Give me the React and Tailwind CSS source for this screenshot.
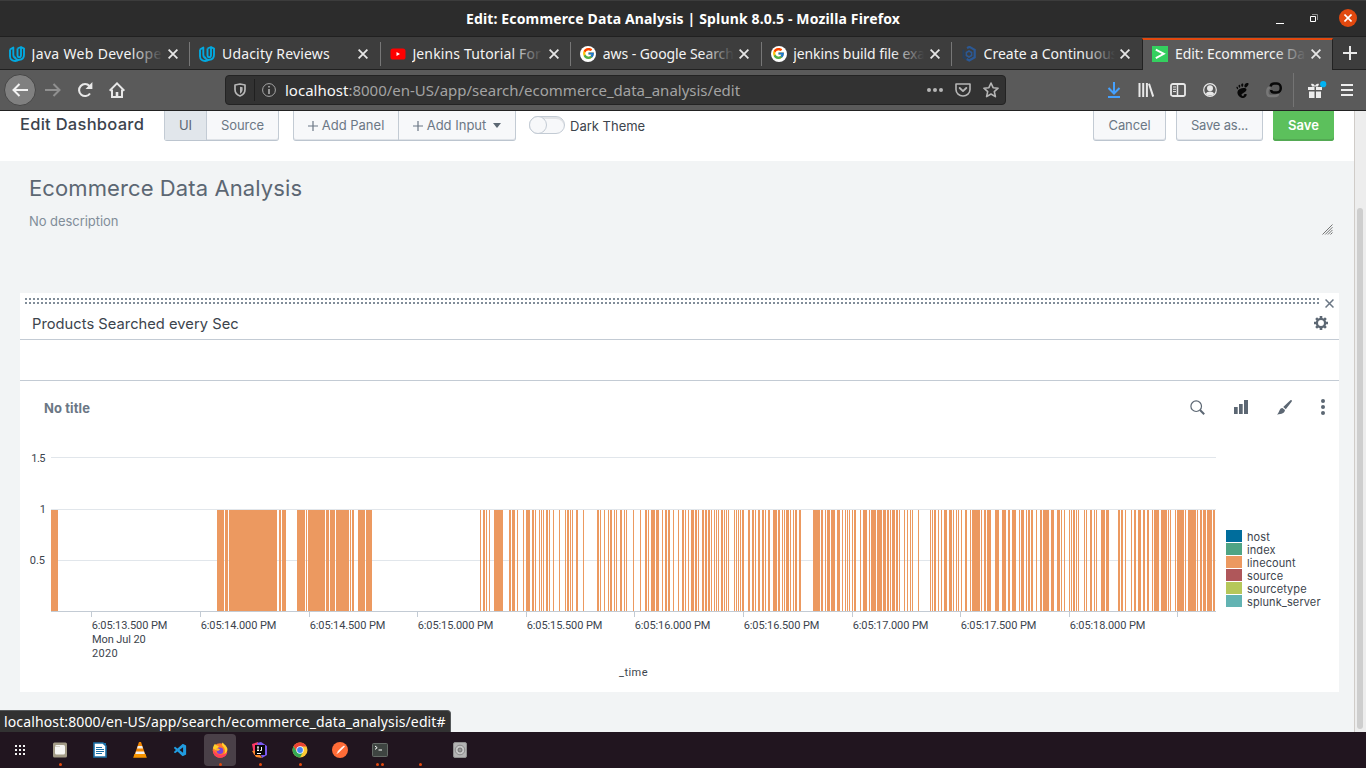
import { FcGoogle } from 'react-icons/fc';
import { SiGnome } from 'react-icons/si';
import { VscVscode } from 'react-icons/vsc';

const Udacity = () => (
  <svg width="16" height="16" viewBox="0 0 16 16" fill="none" stroke="#02a9e0" strokeWidth="1.900" strokeLinejoin="round">
    <path d="M1 3.500 4.300 1.500v7c0 2 .9 3.200 2.400 3.400M1 3.500v6.800c0 3 2.500 4.700 5.200 4.700 1.300 0 2.600-.4 3.600-1.200" />
    <path d="M8.500 2.500 12 1l3 1.600v6.200c0 3-2.200 4.900-4.800 5.100-2.400.1-3.900-1-4.300-3" />
    <path d="M8.500 2.500v6.600c0 1.600.8 2.300 1.900 2.200 1.200-.1 1.600-1.200 1.600-2.600V1" />
  </svg>
);
const YouTube = () => (
  <svg width="16" height="16" viewBox="0 0 16 16">
    <rect x="0.500" y="2.500" width="15" height="11" rx="2.600" fill="#f00" />
    <path d="M6.500 6v4l3.500-2z" fill="#fff" />
  </svg>
);
const Google = () => (
  <span className="flex h-4 w-4 items-center justify-center rounded-full bg-white">
    <FcGoogle size={13} />
  </span>
);
const Hexagon = () => (
  <svg width="16" height="16" viewBox="0 0 16 16" fill="none" stroke="#2b5894">
    <path d="M6 2 8.500.9l5.200 3v7.400L8.300 14.500 5.500 13" strokeWidth="2.200" />
    <path d="M2.500 3.500v8l3 1.700" stroke="#27405f" strokeWidth="2" />
    <path d="m8 5 2.600 1.500v3L8 11 5.400 9.500v-3z" strokeWidth="1.600" />
  </svg>
);
const Splunk = () => (
  <svg width="16" height="16" viewBox="0 0 16 16">
    <path fill="#34d05f" d="M0 0h16v16H0z" />
    <path d="m3.800 3.600 8 4.200-8 4.300" fill="none" stroke="#fff" strokeWidth="1.900" />
  </svg>
);

const tabs = [
  { icon: Udacity, label: 'Java Web Developer', cls: 'tracking-[0.32px]', fade: true },
  { icon: Udacity, label: 'Udacity Reviews', cls: 'tracking-[0.18px]' },
  { icon: YouTube, label: 'Jenkins Tutorial For B', cls: 'tracking-[0.14px]', fade: true },
  { icon: Google, label: 'aws - Google Search', cls: 'tracking-[-0.08px]', fade: true },
  { icon: Google, label: 'jenkins build file exa', cls: 'tracking-[-0.07px]', fade: true },
  { icon: Hexagon, label: 'Create a Continuous', cls: '', fade: true },
  { icon: Splunk, label: 'Edit: Ecommerce Data', cls: 'tracking-[-0.07px]', fade: true, active: true },
];

const Cross = ({ s = 10, w = 1.8, c = '#e6e6e6' }) => (
  <svg width={s} height={s} viewBox="0 0 10 10" stroke={c} strokeWidth={w} fill="none" className="shrink-0">
    <path d="m.6.6 8.800 8.800M9.400.6.6 9.400" />
  </svg>
);

function TitleBar() {
  return (
    <div className="grid h-[37px] shrink-0 grid-cols-[200px_1fr_200px] items-center border-t border-b border-t-[#3c3c3c] border-b-[#202020] bg-[#2c2c2c]">
      <span />
      <div className="pb-px text-center text-[14px] font-bold tracking-[0.15px] text-white">
        Edit: Ecommerce Data Analysis | Splunk 8.0.5 - Mozilla Firefox
      </div>
      <div className="flex items-center justify-end pr-[9px] pb-px">
        <svg width="10" height="12" viewBox="0 0 10 12" className="mr-[24px]"><path d="M1 10.500h8" transform="translate(0 1)" stroke="#fff" /></svg>
        <svg width="10" height="10" viewBox="0 0 10 10" fill="none" className="mr-[20px]">
          <path d="M1.500 3.500h5v5h-5z" stroke="#fff" />
          <path d="M3 1.500h5.500V7" stroke="#8c8c8c" />
        </svg>
        <span className="flex h-[18px] w-[18px] items-center justify-center rounded-full bg-[#e2490f]">
          <Cross s={8} w={2} c="#fff" />
        </span>
      </div>
    </div>
  );
}

function TabStrip() {
  return (
    <div className="flex h-[33px] shrink-0 bg-[#3d3d3d]">
      {tabs.map(({ icon: Icon, label, cls, fade, active }, i) => (
        <div
          key={i}
          className={
            active
              ? 'mt-px flex w-[191px] items-center border-t-2 border-x border-x-[#222] border-t-[#e2490f] bg-[#5a5a5a] pr-[10px] pb-[3px] pl-[9px]'
              : 'flex w-[190.400px] items-center border-b border-[#212121] pr-[12px] pl-[9px] pt-px'
          }
        >
          <Icon />
          <div className="relative ml-[6.600px] h-5 w-[131px] shrink-0 overflow-hidden text-[14px] leading-5 whitespace-nowrap text-[#f4f4f4]">
            <span className={cls}>{label}</span>
            {fade && (
              <span className={active ? 'absolute top-0 right-0 h-5 w-[32px] bg-linear-to-r from-transparent to-[#5a5a5a]' : 'absolute top-0 right-0 h-5 w-[32px] bg-linear-to-r from-transparent to-[#3d3d3d]'} />
            )}
          </div>
          <span className="ml-[5.400px] flex"><Cross /></span>
          {!active && i < 5 && <span className="ml-auto -mr-[12px] h-6 w-px bg-[#777]" />}
        </div>
      ))}
      <div className="flex flex-1 items-center justify-center border-b border-[#212121]">
        <svg width="14" height="14" viewBox="0 0 14 14" stroke="#e8e8e8" strokeWidth="2"><path d="M7 0v14M0 7h14" /></svg>
      </div>
    </div>
  );
}

function NavBar() {
  return (
    <div className="flex h-[41px] shrink-0 items-center border-b border-[#222] bg-[#5a5a5a]">
      <div className="flex w-[225px] items-center pl-1">
        <span className="flex h-8 w-8 items-center justify-center rounded-full border border-[#474747] bg-[#808080]">
          <svg width="16" height="14" viewBox="0 0 16 14" fill="none" stroke="#f2f2f2" strokeWidth="2"><path d="M16 7H1.500M7.500 1l-6 6 6 6" /></svg>
        </span>
        <svg width="16" height="14" viewBox="0 0 16 14" fill="none" stroke="#909090" strokeWidth="2" className="ml-[9px]"><path d="M0 7h14.500M8.500 1l6 6-6 6" /></svg>
        <svg width="16" height="16" viewBox="0 0 16 16" fill="none" className="ml-4">
          <path d="M13 11.500A6 6 0 1 1 12.500 4" stroke="#e8e8e8" strokeWidth="2.100" />
          <path d="M15.400 0v7H8.500z" fill="#e8e8e8" />
        </svg>
        <svg width="16" height="16" viewBox="0 0 16 16" fill="none" stroke="#e8e8e8" className="ml-4">
          <path d="m.6 8.700 7.400-7.300 7.400 7.300" strokeWidth="2" />
          <path d="M3 7.500V15h10V7.500" strokeWidth="2" />
          <path d="M8 10v5" strokeWidth="2.600" />
        </svg>
      </div>
      <div className="flex h-[30px] w-[781px] items-center rounded-[4px] border border-[#232323] bg-[#323232] text-[#a3a3a3]">
        <svg width="12" height="14" viewBox="0 0 12 14" fill="none" stroke="#b6b6b6" className="ml-2">
          <path d="M6 1 11 2v4.500c0 3-2 5.400-5 6.500-3-1.100-5-3.500-5-6.500V2z" strokeWidth="1.700" strokeLinejoin="round" />
          <path d="M6 3.700v7c1.600-.9 2.600-2.300 2.600-4.200v-2.300z" fill="#b6b6b6" stroke="none" />
        </svg>
        <span className="mr-[7px] ml-[8px] h-[22px] w-px bg-[#202020]" />
        <svg width="14" height="14" viewBox="0 0 14 14" fill="none" stroke="#a6a6a6">
          <circle cx="7" cy="7" r="6.400" />
          <path d="M7 6v5M7 3v1.600" strokeWidth="1.700" />
        </svg>
        <span className="ml-[9px] text-[15px] tracking-normal whitespace-nowrap"><span className="text-[#f7f7f7]">localhost</span>:8000/en-US/app/search/ecommerce_data_analysis/edit</span>
        <div className="mr-[6px] ml-auto flex items-center gap-[12px]">
          <svg width="16" height="4" viewBox="0 0 16 4" fill="#b6b6b6"><circle cx="2" cy="2" r="2" /><circle cx="8" cy="2" r="2" /><circle cx="14" cy="2" r="2" /></svg>
          <svg width="16" height="14" viewBox="0 0 16 14" fill="none" stroke="#b6b6b6" strokeLinecap="round" strokeLinejoin="round">
            <path d="M1 1h14v5.500a7 6.500 0 0 1-14 0z" strokeWidth="1.600" />
            <path d="m4.700 5 3.300 3.100L11.300 5" strokeWidth="1.900" />
          </svg>
          <svg width="16" height="16" viewBox="0 0 16 16" fill="none" stroke="#b6b6b6" strokeWidth="1.600" strokeLinejoin="round"><path d="m8 1 2.100 4.700 5 .5-3.800 3.400 1.100 5L8 12l-4.400 2.600 1.100-5L.9 6.200l5-.5z" /></svg>
        </div>
      </div>
      <div className="ml-auto flex items-center">
        <svg width="14" height="16" viewBox="0 0 14 16" fill="none" stroke="#45a1ff" strokeWidth="2"><path d="M7 0v11M1.500 6 7 11.500 12.500 6M1 15h12" /></svg>
        <svg width="16" height="14" viewBox="0 0 16 14" stroke="#e8e8e8" strokeWidth="2" className="ml-[17px]"><path d="M1.500 0v14M5.200 0v14M8.900 0v14M11 .8l4.200 12.800" strokeWidth="2" /></svg>
        <svg width="16" height="14" viewBox="0 0 16 14" fill="none" stroke="#e8e8e8" className="ml-[16px]">
          <rect x="1" y="1" width="14" height="12" rx="1.800" strokeWidth="1.800" /><path d="M7.500 1v12" strokeWidth="1.500" /><path d="M3 4h3M3 6.300h3M3 8.600h3" />
        </svg>
        <svg width="14" height="14" viewBox="0 0 14 14" className="ml-[17px]">
          <circle cx="7" cy="7" r="6.300" fill="none" stroke="#e8e8e8" strokeWidth="1.200" />
          <circle cx="7" cy="5.300" r="3" fill="#e8e8e8" /><path d="M2.800 11c.7-2 2.300-2.600 4.200-2.600s3.500.6 4.200 2.600A6 6 0 0 1 7 12.600 6 6 0 0 1 2.800 11" fill="#e8e8e8" />
        </svg>
        <SiGnome size={15} color="#080808" className="ml-[18px]" />
        <svg width="16" height="16" viewBox="0 0 16 16" fill="none" strokeWidth="2.500" className="ml-[16px]">
          <path d="M4.500 5.500H4C.4 6 .4 14 4 14h5c2 0 3-.8 3-2.500" stroke="#777" />
          <path d="M4.500 4.500C5 2.500 6 1.500 8 1.500h3c5 0 5 9 0 9H8c-2 0-2.800-1-2.800-2.500" stroke="#080808" />
        </svg>
        <span className="ml-[11px] h-[34px] w-px bg-[#747474]" />
        <svg width="20" height="18" viewBox="0 0 20 18" className="ml-[14px]">
          <path d="M0 6h6.500v3H0zM8 6h6v3H8zM1 10.500h5.500V17H1zM8 10.500h5V17H8zM3 3c2-1 3.500.500 4 2 .5-1.500 2-3 4-2l-1 2.500H4z" fill="#ededed" />
          <circle cx="15.200" cy="3.200" r="3.100" fill="#00b3f4" />
        </svg>
        <svg width="12" height="12" viewBox="0 0 12 12" stroke="#ededed" strokeWidth="2" className="mr-[13px] ml-[13px]"><path d="M0 1h12M0 6h12M0 11h12" /></svg>
      </div>
    </div>
  );
}

const Plus = () => (
  <svg width="10" height="10" viewBox="0 0 10 10" stroke="#6b7785" strokeWidth="1.200" className="mr-1"><path d="M5 0v10M0 5h10" /></svg>
);

function DashboardHeader() {
  const group = 'flex h-[30px] items-stretch rounded-b-[3px] border border-t-0 border-[#c3cbd4] border-b-[#bcc5cf] bg-[#f7f8fa] text-[13px] text-[#6b7785] shadow-[inset_0_-1px_0_#dfe3e8]';
  const cell = 'flex items-center justify-center';
  return (
    <div className="flex h-[50px] shrink-0 items-start bg-white pr-[20px] pl-5 font-[Inter,sans-serif]">
      <h1 className="w-[144px] pt-px text-[16.500px] leading-[24px] font-medium tracking-[0.270px] text-[#3c444d]">Edit Dashboard</h1>
      <div className={`${group} w-[115px]`}>
        <span className={`${cell} w-[42px] border-r border-[#c3cbd4] bg-[#e1e6eb] text-[#5c6773]`}>UI</span>
        <span className={`${cell} flex-1 tracking-[-0.090px]`}>Source</span>
      </div>
      <div className={`${group} ml-[14px] w-[223px]`}>
        <span className={`${cell} w-[105px] border-r border-[#c3cbd4]`}><Plus />Add Panel</span>
        <span className={`${cell} flex-1`}>
          <Plus />Add Input
          <svg width="8" height="5" viewBox="0 0 8 5" className="ml-[7px]"><path d="M0 0h8L4 5z" fill="#5c6773" /></svg>
        </span>
      </div>
      <span className="mt-[5px] ml-[13px] flex h-[18px] w-[36px] rounded-full border border-[#c3cbd4] bg-[#f7f8fa] shadow-[inset_0_2px_0_#e1e3e6]">
        <span className="-mt-px -ml-px h-[18px] w-[18px] rounded-full border border-[#c3cbd4] bg-[#f7f8fa]" />
      </span>
      <span className="ml-[5px] pt-[5px] text-[13px] leading-5 text-[#3c444d]">Dark Theme</span>
      <div className="ml-auto flex gap-[10px]">
        <span className={`${group} ${cell} w-[73px]`}><span className="self-center tracking-[-0.110px]">Cancel</span></span>
        <span className={`${group} ${cell} w-[87px]`}><span className="self-center tracking-[-0.200px]">Save as...</span></span>
        <span className="flex h-[30px] w-[61px] items-center justify-center rounded-b-[3px] bg-[#5cc05c] text-[13px] font-semibold text-white shadow-[inset_0_-2px_0_#53a953]">Save</span>
      </div>
    </div>
  );
}

/* [x, width] of every bucket that has events */
const bars = [
  [51,7],[217,7],[225,3],[229,48],[279,2],[282,4],[297,8],[306,1],[308,17],[326,3],[330,5],[336,13],[350,1],[352,2],[358,7],[366,6],
  [480,1],[483,2],[486,1],[489,1],[494,9],[509,2],[512,3],[517,1],[523,1],[526,4],[532,2],[535,1],[539,1],[541,1],[543,1],[546,2],[549,1],[553,1],[559,1],[565,1],[567,2],[570,1],[572,1],[576,2],[583,1],[597,2],[600,1],[604,1],[608,1],[610,2],[614,1],[616,1],[620,2],[624,1],[626,1],[633,1],[640,1],[645,2],[648,1],[651,4],[656,3],[662,1],[665,2],[668,2],[673,1],[678,1],[682,2],[685,1],[688,1],[691,3],[695,2],[698,1],[702,2],[705,2],[708,2],[711,1],[714,1],[716,1],[718,1],[721,2],[724,1],
  [726,1],[728,1],[734,1],[736,1],[738,1],[740,1],[742,2],[748,2],[752,2],[755,1],[758,2],[762,2],[765,1],[768,2],[773,4],[778,2],[782,1],[784,1],[786,3],[790,1],[793,1],[795,2],[799,2],[813,7],[821,2],[825,1],[827,3],[831,4],[837,3],[842,1],[845,1],[847,1],[849,1],[852,1],[854,2],[860,1],[863,4],[869,1],[871,5],[877,5],[883,3],[887,2],[890,1],[892,3],[896,2],[899,1],[904,1],[907,1],[910,1],[912,1],[918,1],[930,1],[932,1],[934,2],[938,1],[941,1],[944,3],[949,3],[953,1],[956,1],[958,1],[961,1],[965,2],
  [970,1],[972,8],[981,1],[984,2],[987,4],[995,4],[1002,4],[1008,2],[1012,4],[1019,1],[1021,3],[1026,1],[1028,2],[1031,2],[1036,1],[1040,2],[1043,6],[1051,3],[1057,3],[1061,1],[1064,1],[1069,1],[1071,1],[1073,2],[1076,1],[1078,1],[1084,1],[1086,1],[1090,2],[1094,1],[1096,1],[1101,4],[1106,3],[1118,2],[1121,2],[1125,1],[1131,1],[1134,2],[1138,3],[1143,2],[1147,2],[1152,1],[1154,5],[1161,6],[1168,1],[1170,1],[1175,1],[1177,7],[1185,1],[1188,8],[1197,1],[1200,2],[1203,3],[1207,5],[1213,2],
];
const ticks = [
  [91, '6:05:13.500 PM'], [200, '6:05:14.000 PM'], [309, '6:05:14.500 PM'], [417, '6:05:15.000 PM'], [526, '6:05:15.500 PM'],
  [634, '6:05:16.000 PM'], [743, '6:05:16.500 PM'], [852, '6:05:17.000 PM'], [960, '6:05:17.500 PM'], [1069, '6:05:18.000 PM'], [1177, ''],
];
const legend = [
  ['host', '#006d9c'], ['index', '#4fa484'], ['linecount', '#ec9960'], ['source', '#af575a'], ['sourcetype', '#b6c75a'], ['splunk_server', '#62b3b2'],
];

function Chart() {
  return (
    <svg width="1319" height="262" viewBox="20 430 1319 262" className="block shrink-0 font-[Roboto,sans-serif] text-[11px]" fill="#3c444d">
      <path d="M51 457.500h1165M51 509.500h1165M51 560.500h1165" stroke="#e1e6eb" />
      {bars.map(([x, w]) => <rect key={x} x={x} y="510" width={w} height="101" fill="#ec9960" />)}
      <path d="M51 611.500h1165" stroke="#c3cbd4" />
      <g textAnchor="end"><text x="45" y="462" className="tracking-[-0.500px]">1.5</text><text x="46" y="513">1</text><text x="45" y="564">0.5</text></g>
      {ticks.map(([x, t]) => (
        <g key={x}>
          <path d={`M${x + 0.5} 612v5`} stroke="#c3cbd4" />
          <text x={x + 0.7} y="629" className="tracking-[-0.100px]">{t}</text>
        </g>
      ))}
      <text x="92" y="643" className="tracking-[-0.100px]">Mon Jul 20</text>
      <text x="92" y="657" className="tracking-[0.300px]">2020</text>
      <text x="619" y="676" className="tracking-[0.450px]">_time</text>
      {legend.map(([t, c], i) => (
        <g key={t}>
          <rect x="1226" y={530 + i * 13} width="16" height="12" fill={c} />
          <text x="1247" y={541 + i * 13} className="font-[Inter,sans-serif] tracking-[0.100px]">{t}</text>
        </g>
      ))}
    </svg>
  );
}

function Panel() {
  return (
    <div className="mx-5 mr-[15px] flex h-[399px] flex-col bg-white">
      <div className="flex h-[17px] items-start pt-[5px] pl-[5px]">
        <svg width="1296" height="6" className="shrink-0">
          <defs><pattern id="grip" width="4" height="4" patternUnits="userSpaceOnUse"><path d="M0 0h2v2H0z" fill="#818d99" /></pattern></defs>
          <rect width="1296" height="6" fill="url(#grip)" />
        </svg>
        <span className="ml-[4px] pt-px"><Cross s={9} w={1.7} c="#6b7785" /></span>
      </div>
      <div className="flex h-[30px] items-start justify-between border-b border-[#c3cbd4] pr-[11px] pl-3">
        <span className="pt-[4px] text-[14.700px] leading-5 tracking-[0.030px] text-[#3c444d]">Products Searched every Sec</span>
        <svg width="14" height="14" viewBox="-7 -7 14 14" className="mt-[6px]">
          <circle r="4.100" fill="none" stroke="#5c6773" strokeWidth="2.300" />
          <g stroke="#5c6773" strokeWidth="2.600"><path d="M0-7v2.500M0 7V4.500M-7 0h2.500M7 0H4.500M-4.900-4.900l1.700 1.700M4.900 4.900 3.200 3.200M-4.900 4.900l1.700-1.700M4.900-4.900 3.200-3.200" /></g>
        </svg>
      </div>
      <div className="h-[41px] border-b border-[#c3cbd4]" />
      <div className="flex h-[49px] items-start justify-between pr-[14px] pl-6">
        <span className="pt-[17px] text-[13px] leading-5 font-bold tracking-[0.090px] text-[#6b7785]">No title</span>
        <div className="flex h-[52px] items-center">
          <svg width="15" height="15" viewBox="0 0 15 15" fill="none" stroke="#5c6773"><circle cx="6.200" cy="6.200" r="5.300" strokeWidth="1.200" /><path d="m10 10 4.200 4.200" strokeWidth="2" /></svg>
          <svg width="14" height="14" viewBox="0 0 14 14" fill="#5c6773" className="ml-[29px]"><path d="M0 7h3.700v7H0zM5 4h3.700v10H5zM10 0h4v14h-4z" /></svg>
          <svg width="15" height="15" viewBox="0 0 15 15" fill="#5c6773" className="ml-[29px]"><path d="M14.600.3c.5.500.3 1-.2 1.700L8.800 9.200 6.200 7.100 12.600.9c.8-.8 1.500-1.100 2-.6M5.400 7.900 8 10c-.3 3-3.500 4.500-8 4.400 2.500-1.600 2-6.400 5.400-6.500" /></svg>
          <svg width="4" height="16" viewBox="0 0 4 16" fill="#5c6773" className="ml-[29px]"><circle cx="2" cy="2" r="2" /><circle cx="2" cy="8" r="2" /><circle cx="2" cy="14" r="2" /></svg>
        </div>
      </div>
      <Chart />
    </div>
  );
}

const Lib = ({ children }) => <svg width="16" height="16" viewBox="0 0 16 16">{children}</svg>;
const apps = [
  { dots: 0, el: <Lib><g fill="#f2f2f2">{[3, 7, 11].map((y) => [3, 7, 11].map((x) => <rect key={`${x}-${y}`} x={x} y={y} width="2" height="2" />))}</g></Lib> },
  { dots: 1, el: <Lib><rect x="1" y="0.500" width="14" height="15" rx="1.500" fill="#a39b86" /><rect x="3" y="3" width="10" height="9.500" rx="1.500" fill="#f6f5f2" /><path d="M3 4.500h5" stroke="#d6d1c7" /></Lib> },
  { dots: 0, el: <Lib><path d="M2 1h9l3 3v11H2z" fill="#fff" stroke="#1c71a8" strokeWidth="1.600" /><path d="M4 5.500h6M4 7.500h8M4 9.500h8M4 11.500h6" stroke="#1c71a8" strokeWidth="1.200" /><path d="M11 1h3v3z" fill="#1c71a8" /></Lib> },
  { dots: 0, el: <Lib><path d="M7 0h2l4.500 13h-11z" fill="#f28500" /><path d="m5.800 4 4.400 0 .8 2.500H5zM4 9.500h8l.8 2.500H3.300z" fill="#eee" /><path d="M2.500 12h11l1.300 3.800H1.200z" fill="#f79400" /></Lib> },
  { dots: 0, el: <VscVscode size={15} color="#219ce0" /> },
  { dots: 1, active: true, el: <Lib><circle cx="8" cy="8.500" r="7.300" fill="#ff7a2b" /><path d="M1 8C1 12.500 4 16 9 15.800c4-.3 6-3 6.300-6C12 14 5 14 1 8" fill="#ff3f5a" /><path d="M10.500.5c-1 1.500-.5 3 .5 4 2 2 2.500 4 1.500 7.500 2-1 3-4 2.900-5.200C14.500 3.500 12 2.500 10.500.5M1 6.500C1.300 4.500 2 3 3 1.800 3.500 3 5 4 7 4L4 8z" fill="#ffd02b" /><circle cx="8" cy="8.700" r="3.300" fill="#7a42d8" /><path d="M3.500 6.500c2-.8 3.500 0 4.500 1C7 9 5 9 4.500 8.500z" fill="#ffb52a" /></Lib> },
  { dots: 1, el: <Lib><path d="M0 2 6 0l2 8-6 5z" fill="#fe3866" /><path d="m5 1 4-1 6 4v9l-5 3z" fill="#7a58f0" /><path d="m0 9 5-1 5 8-6-1z" fill="#fb8a2b" /><rect x="3" y="3" width="10" height="10" fill="#080808" /><path d="M5 5h2M6 5v3.500M5 8.500h2M9.500 5v3.500H8.200M5 11.500h4" stroke="#fff" fill="none" /></Lib> },
  { dots: 1, el: <Lib><circle cx="8" cy="8" r="7.500" fill="#fcc934" /><path d="M1.500 4.300A7.500 7.500 0 0 1 14.600 4.500H8L5 9.700z" fill="#ea4335" /><path d="M1.500 4.300A7.500 7.500 0 0 0 8 15.500l3.200-5.700H5z" fill="#34a853" /><circle cx="8" cy="8" r="3.700" fill="#fff" /><circle cx="8" cy="8" r="2.900" fill="#4285f4" /></Lib> },
  { dots: 0, el: <Lib><circle cx="8" cy="8" r="8" fill="#ff6c37" /><path d="m12 3.500-6 6-1.700 2.700 2.600-1.800 6-6z" fill="#fff" /><path d="m6 9.500 5-5" stroke="#fff" /></Lib> },
  { dots: 2, el: <Lib><rect x="0.500" y="1.500" width="15" height="13" rx="1" fill="#3e4441" stroke="#666c68" /><path d="m3 4 2.200 1.700L3 7.400M6.500 8h3.500" stroke="#fff" fill="none" /></Lib> },
  { dots: 1, el: <span className="h-4 w-4" /> },
  { dots: 0, el: <Lib><rect x="1.500" y="0.500" width="13" height="15" rx="1.500" fill="#b4b4b4" stroke="#8f8f8f" /><circle cx="8" cy="8" r="4.800" fill="#c6c6c6" stroke="#8a8a8a" /><circle cx="8" cy="8" r="2" fill="#9a9a9a" stroke="#707070" /></Lib> },
];

function Taskbar() {
  return (
    <div className="flex h-9 shrink-0 items-center bg-[#21151f] pl-1">
      {apps.map(({ dots, el, active }, i) => (
        <div key={i} className={active ? 'relative mr-2 flex h-8 w-8 items-center justify-center rounded-[4px] bg-[#4a4048]' : 'relative mr-2 flex h-8 w-8 items-center justify-center'}>
          {el}
          <span className="absolute bottom-0 left-0 flex w-full justify-center gap-[2px]">
            {Array.from({ length: dots }, (_, d) => <span key={d} className="h-[3px] w-[3px] rounded-full bg-[#e2490f]" />)}
          </span>
        </div>
      ))}
    </div>
  );
}

export default function App() {
  return (
    <div className="flex h-[768px] w-[1366px] flex-col overflow-hidden bg-[#f2f4f5] font-['Noto_Sans',sans-serif]">
      <TitleBar />
      <TabStrip />
      <NavBar />
      <div className="relative flex h-[621px] shrink-0">
        <div className="flex w-[1354px] flex-col font-[Inter,sans-serif]">
          <DashboardHeader />
          <div className="h-[132px] px-[21px] pl-[29px]">
            <h2 className="pt-[12px] text-[22px] leading-[30px] tracking-[0.100px] text-[#5c6773]">Ecommerce Data Analysis</h2>
            <p className="pt-[8px] text-[13px] leading-5 tracking-[-0.050px] text-[#818d99]">No description</p>
            <div className="-mt-[7px] flex justify-end">
              <svg width="11" height="11" viewBox="0 0 11 11" stroke="#666" strokeWidth="0.900"><path d="M.5 10.500l10-10M3.200 10.500l7.300-7.300M5.900 10.500l4.600-4.600M8.500 10.500l2-2" /></svg>
            </div>
          </div>
          <Panel />
        </div>
        <div className="w-3 border-l border-[#d0ccc8] bg-[#ededed] pt-[97px] pl-[2px]">
          <div className="h-[521px] w-[6px] rounded-full bg-[#cecece]" />
        </div>
        <div className="absolute bottom-0 left-0 flex h-[22px] w-[451px] items-center rounded-tr-[4px] border-t border-r border-[#55585a] bg-[#323232] pl-1 text-[14px] tracking-[0.130px] whitespace-nowrap text-white">
          localhost:8000/en-US/app/search/ecommerce_data_analysis/edit#
        </div>
      </div>
      <Taskbar />
    </div>
  );
}
